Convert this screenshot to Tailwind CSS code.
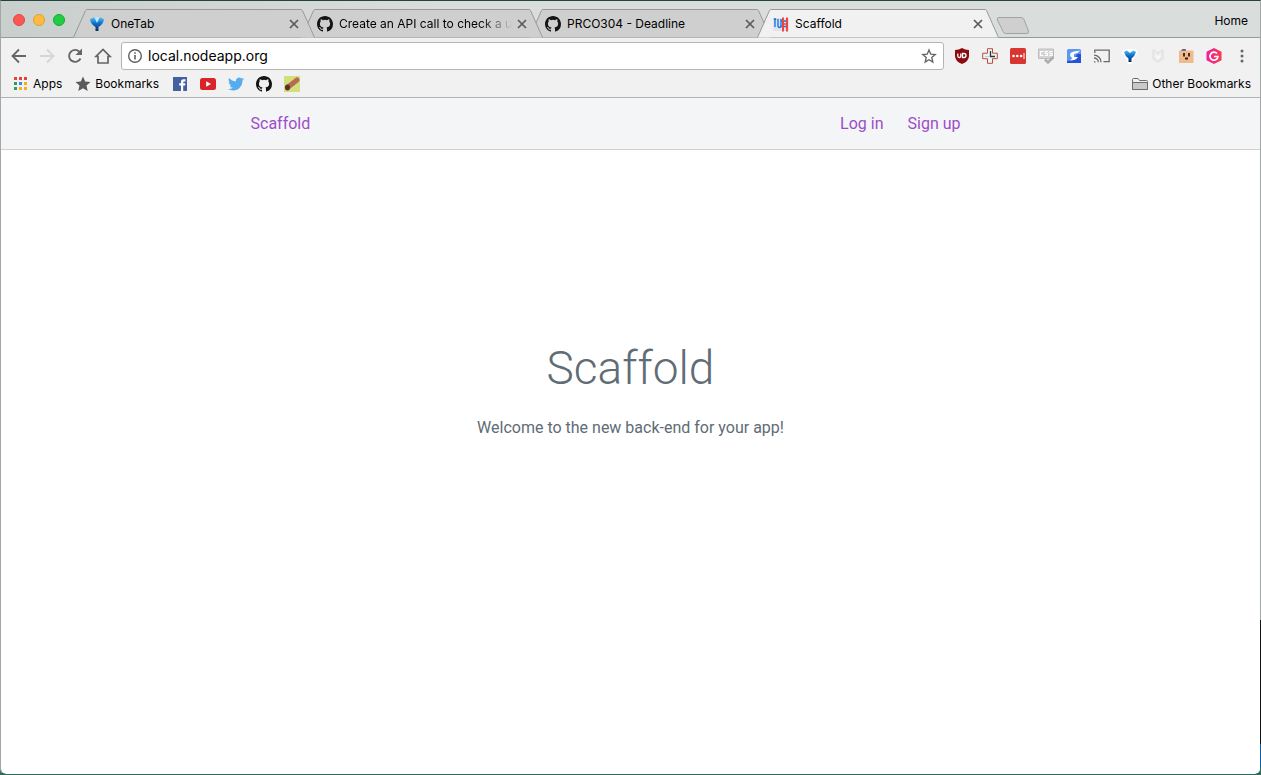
<!DOCTYPE html>
<html lang="en">
<head>
<meta charset="utf-8">
<title>Scaffold</title>
<script src="https://cdn.jsdelivr.net/npm/@tailwindcss/browser@4"></script>
</head>
<body class="bg-[linear-gradient(#a3a7a6_80%,#151515_80%_96%,#0b5fa5_96%_99%,#2f6b5c_99%)]">
<svg class="absolute size-0" aria-hidden="true">
  <symbol id="github" viewBox="0 0 16 16"><path fill="#141414" d="M8 0C3.58 0 0 3.58 0 8c0 3.54 2.29 6.53 5.47 7.59.4.07.55-.17.55-.38 0-.19-.01-.82-.01-1.49-2.01.37-2.53-.49-2.69-.94-.09-.23-.48-.94-.82-1.13-.28-.15-.68-.52-.01-.53.63-.01 1.08.58 1.23.82.72 1.21 1.87.87 2.33.66.07-.52.28-.87.51-1.07-1.78-.2-3.64-.89-3.64-3.95 0-.87.31-1.59.82-2.15-.08-.2-.36-1.02.08-2.12 0 0 .67-.21 2.2.82a7.6 7.6 0 0 1 4 0c1.53-1.04 2.2-.82 2.2-.82.44 1.1.16 1.92.08 2.12.51.56.82 1.27.82 2.15 0 3.07-1.87 3.75-3.65 3.95.29.25.54.73.54 1.48 0 1.07-.01 1.93-.01 2.2 0 .21.15.46.55.38A8 8 0 0 0 16 8c0-4.42-3.58-8-8-8z"/></symbol>
  <symbol id="close" viewBox="0 0 10 10"><path d="M1 1l8 8M9 1L1 9" stroke="#5a5a5a" stroke-width="1.7" fill="none"/></symbol>
  <linearGradient id="blue" x2="0" y2="1"><stop offset="0" stop-color="#52c2f2"/><stop offset=".4" stop-color="#1673cf"/><stop offset="1" stop-color="#062c5c"/></linearGradient>
  <linearGradient id="gem" x2="1" y2="0"><stop offset="0" stop-color="#f01ea0"/><stop offset="1" stop-color="#f83a4c"/></linearGradient>
  <symbol id="tab" viewBox="0 0 242 29"><path d="M.5 28.500L12.500 1.500Q13 .5 14 .5H228Q229 .5 229.500 1.500L241.500 28.500" stroke="#979a99"/></symbol>
</svg>
<div class="flex min-h-screen flex-col overflow-hidden rounded-b-md border-x border-t border-b border-t-[#24453f] border-r-transparent border-b-[#2f6b5c] border-l-[#a3a7a6] bg-white bg-clip-padding font-['Inter','Liberation_Sans',sans-serif] text-black">

  <header class="text-xs leading-4">
    <div class="flex h-[37px] border-b border-[#979a99] bg-linear-to-r from-[#c9cfcd] to-[#d9dddc] to-35%">
      <div class="flex w-[72px] shrink-0 gap-2 pt-[13px] pl-3">
        <button aria-label="Close window" class="size-3 rounded-full border border-[#e2463f] bg-[#fc5753]"></button>
        <button aria-label="Minimize window" class="size-3 rounded-full border border-[#e0a12c] bg-[#fdbc40]"></button>
        <button aria-label="Zoom window" class="size-3 rounded-full border border-[#12ac28] bg-[#22cc44]"></button>
      </div>
      <nav aria-label="Tabs" class="mt-2 flex h-[29px]">
        <div class="relative z-30 flex w-[242px] items-center pr-3 pl-4">
          <svg class="absolute inset-0 h-[29px] w-[242px]" fill="#cfcfcf"><use href="#tab"/></svg>
          <svg class="relative size-4" viewBox="0 0 16 16" aria-hidden="true"><path d="M1 3.500Q3 1.500 5 1.500L8 3l3-1.500q2 0 4 2Q14 8.500 9.500 11v4h-3v-4Q2 8.500 1 3.500z" fill="url(#blue)"/><path d="M5.500 1.500h5L8 7z" fill="#bfeaff"/></svg>
          <a href="#" class="relative ml-[6px] flex-1">OneTab</a>
          <button aria-label="Close OneTab" class="relative p-1"><svg class="size-[10px]"><use href="#close"/></svg></button>
        </div>
        <div class="relative z-20 -ml-[14px] flex w-[242px] items-center pr-3 pl-4">
          <svg class="absolute inset-0 h-[29px] w-[242px]" fill="#cfcfcf"><use href="#tab"/></svg>
          <svg class="relative size-4 shrink-0" aria-hidden="true"><use href="#github"/></svg>
          <a href="#" class="relative mr-auto ml-[6px] whitespace-nowrap mask-r-from-82% mask-r-to-100%">Create an API call to check a u</a>
          <button aria-label="Close Create an API call" class="relative -ml-4 p-1"><svg class="size-[10px]"><use href="#close"/></svg></button>
        </div>
        <div class="relative z-10 -ml-[14px] flex w-[242px] items-center pr-3 pl-4">
          <svg class="absolute inset-0 h-[29px] w-[242px]" fill="#cfcfcf"><use href="#tab"/></svg>
          <svg class="relative size-4" aria-hidden="true"><use href="#github"/></svg>
          <a href="#" class="relative ml-[6px] flex-1">PRCO304 - Deadline</a>
          <button aria-label="Close PRCO304" class="relative p-1"><svg class="size-[10px]"><use href="#close"/></svg></button>
        </div>
        <div class="relative z-40 -ml-[14px] flex w-[242px] items-center pr-3 pl-4">
          <svg class="absolute inset-0 h-[29px] w-[242px]" fill="#f1f1f1"><use href="#tab"/></svg>
          <svg class="relative size-4" viewBox="0 0 16 16" aria-hidden="true"><rect y="2" width="16" height="13" rx="2" fill="#dfe3e8"/><path d="M1 2.500l1 1.500 1-1.500M2 3.500V11M5 3v6.500q0 2 1.500 2t1.500-2V3M8 5h7M8 10.500h7" stroke="#1976e8" stroke-width="1.400" fill="none"/><path d="M10 1.500v14M14 1.500v14" stroke="#ee4540" stroke-width="2"/><path d="M10 8h4" stroke="#ee4540" stroke-width="1.400"/></svg>
          <a href="#" aria-current="page" class="relative ml-[6px] flex-1">Scaffold</a>
          <button aria-label="Close Scaffold" class="relative p-1"><svg class="size-[10px]"><use href="#close"/></svg></button>
        </div>
      </nav>
      <button aria-label="New tab" class="-ml-[3px] self-start pt-4"><svg class="h-[18px] w-[34px]" viewBox="0 0 34 18"><path d="M3 .5H25Q27 .5 28 2.500L32.500 14Q33 16.500 31 16.500H9.500Q8 16.500 7 14.500L1.500 3Q.5.5 3 .5z" fill="#cfcfcf" stroke="#a0a3a2"/></svg></button>
      <button class="ml-auto self-start pt-3 pr-3">Home</button>
    </div>

    <div class="border-b border-[#b2b2b2] bg-[#f1f1f1]">
      <div class="flex items-center pt-1 pr-[10px]">
        <div class="flex w-[120px] shrink-0 gap-2 pl-2">
          <button aria-label="Back" class="size-5"><svg viewBox="0 0 20 20" fill="none" stroke="#666" stroke-width="1.800"><path d="M17 10H4M10 3.500L3.500 10L10 16.500"/></svg></button>
          <button aria-label="Forward" class="size-5"><svg viewBox="0 0 20 20" fill="none" stroke="#d6d6d6" stroke-width="1.800"><path d="M3 10H16M10 3.500L16.500 10L10 16.500"/></svg></button>
          <button aria-label="Reload" class="size-5"><svg viewBox="0 0 20 20" fill="none" stroke="#666" stroke-width="1.900"><path d="M15.500 12.500A6 6 0 1 1 14.500 5.800"/><path d="M17 2.500V9H10.500z" fill="#666" stroke="none"/></svg></button>
          <button aria-label="Home page" class="size-5"><svg viewBox="0 0 20 20" fill="none" stroke="#666" stroke-width="1.700"><path d="M5 10.500H3L10 3.500l7 7H15V17H5z"/></svg></button>
        </div>
        <div class="flex h-7 flex-1 items-center rounded-[3px] border border-[#b4b4b4] bg-white px-[5px]">
          <svg class="size-4 shrink-0" viewBox="0 0 16 16" fill="none" stroke="#5f5f5f" aria-hidden="true"><circle cx="8" cy="8" r="6.300" stroke-width="1.400"/><path d="M8 7v4.500M8 4.200v1.600" stroke-width="1.600"/></svg>
          <input aria-label="Address" value="local.nodeapp.org" class="ml-[5px] min-w-0 flex-1 bg-transparent text-sm outline-none">
          <button aria-label="Bookmark this page"><svg class="size-[18px]" viewBox="0 0 18 18" fill="none" stroke="#666" stroke-width="1.400"><path d="M9 3l1.800 4.200 4.400.4-3.400 3 1 4.400L9 12.700 5.200 15l1-4.400-3.400-3 4.400-.4z"/></svg></button>
        </div>
        <div class="ml-[10px] flex gap-3">
          <button aria-label="uBlock" class="size-4"><svg viewBox="0 0 16 16"><path d="M8 0q3 2 7 2v6q0 5-7 8q-7-3-7-8V2q4 0 7-2z" fill="#8c0b0f"/><path d="M3.800 5.500v2.500q0 1.500 1.500 1.500T6.800 8V5.500M8.500 5.500H10a2 2 0 0 1 0 4H8.500z" stroke="#fff" stroke-width="1.300" fill="none"/></svg></button>
          <button aria-label="Web timer" class="size-4"><svg viewBox="0 0 16 16"><path d="M5.500.7h5v4.500h4.800v5.500h-4.800v4.600h-5v-4.600H.7V5.200h4.800z" fill="#eef2f7" stroke="#b5503f"/><path d="M8.500 3v5.500H13" stroke="#333" stroke-width="1.300" fill="none"/><path d="M3 8.500h5" stroke="#c3cbd6"/></svg></button>
          <button aria-label="Password manager" class="size-4"><svg viewBox="0 0 16 16"><rect width="16" height="16" rx="1.500" fill="#d93531"/><circle cx="3.500" cy="8" r="1.300" fill="#fff"/><circle cx="7.300" cy="8" r="1.300" fill="#fff"/><circle cx="11.100" cy="8" r="1.300" fill="#fff"/><path d="M14 5v6" stroke="#fff"/></svg></button>
          <button aria-label="CSS checker" class="size-4"><svg viewBox="0 0 16 16" fill="none"><path d="M.5 1h15v9.500H.5z" fill="#d4d4d4" stroke="#bdbdbd"/><path d="M5.500 3.500h-3v4h3M10 3.500H7.500v2h2v2H7M14.500 3.500H12v2h2v2h-2.500" stroke="#fff" stroke-width="1.200"/><path d="M7 11.500l3 3L15.500 9" stroke="#acacac" stroke-width="2.500"/></svg></button>
          <button aria-label="Sync" class="size-4"><svg viewBox="0 0 16 16"><rect x="1" y="1" width="14" height="14" rx="1.500" fill="#5c97f6"/><path d="M15 6v9H1v-2q8 0 10-7z" fill="#2453d8"/><path d="M4 6.500q.5-2.500 4-3L14 2.500 11.500 5 8 6v3h4q-2 3.500-8 3.500L6.500 10Q4 9 4 6.500z" fill="#fff"/></svg></button>
          <button aria-label="Cast" class="size-4"><svg viewBox="0 0 16 16" fill="none" stroke="#6a6a6a" stroke-width="1.300"><path d="M.8 5V2.200H15.200V13.700H9.500M0 7.200A7 7 0 0 1 7 14.300M0 10a4.300 4.300 0 0 1 4.300 4.300"/><path d="M0 12.500l2 2H0z" fill="#6a6a6a" stroke="none"/></svg></button>
          <button aria-label="OneTab" class="size-4"><svg viewBox="0 0 16 16"><path d="M3 1h10l3 3-5 8-1 4H6l-1-4L0 4z" fill="#fff"/><path d="M2 4Q3.500 2.500 5 2.500L8 5l3-2.500q1.500 0 3 1.500-1 4-4.500 6.500V14h-3v-3.500Q3 8 2 4z" fill="url(#blue)"/></svg></button>
          <button aria-label="Site advisor" class="size-4"><svg viewBox="0 0 16 16"><path d="M3 1.500l5 3.500 5-3.500v9l-5 4-5-4z" fill="#eaeaea" stroke="#dedede"/><path d="M5.500 6l2.500 2 2.500-2v3.500L8 11.500 5.500 9.500z" fill="#f8f8f8"/></svg></button>
          <button aria-label="Face" class="size-4"><svg viewBox="0 0 16 16"><path d="M1 2.500h14.500V15H1z" fill="#f0ba8c"/><path d="M3 2.500Q4 .5 8 1.500v1z" fill="#19194a"/><path d="M6 5v3.500M11 5v3.500M7 10.500h3" stroke="#30201c" stroke-width="1.800"/></svg></button>
          <button aria-label="Grammar" class="size-4"><svg viewBox="0 0 16 16"><path d="M8 0l7.500 3.800v8.400L8 16 .5 12.200V3.800z" fill="url(#gem)"/><path d="M11 5.500A4 4 0 1 0 12 8.500H8" stroke="#fff" stroke-width="1.700" fill="none"/></svg></button>
          <button aria-label="Menu" class="size-4"><svg viewBox="0 0 16 16" fill="#666"><circle cx="8" cy="3" r="1.500"/><circle cx="8" cy="8" r="1.500"/><circle cx="8" cy="13" r="1.500"/></svg></button>
        </div>
      </div>

      <nav aria-label="Bookmarks" class="flex h-[27px] items-center pr-[9px] pl-3">
        <a href="#" class="flex items-center gap-[5px]"><svg class="size-[15px]" viewBox="0 0 15 15"><path fill="#ea4035" d="M1 1h3v3H1zM6 1h3v3H6zM11 1h3v3h-3z"/><path fill="#2e9e58" d="M1 6h3v3H1zM1 11h3v3H1z"/><path fill="#3f82f0" d="M6 6h3v3H6z"/><path fill="#f3ae22" d="M11 6h3v3h-3zM11 11h3v3h-3zM6 11h3v3H6z"/></svg>Apps</a>
        <a href="#" class="ml-[13px] flex items-center gap-1"><svg class="size-4" viewBox="0 0 16 16" fill="#5a5a5a"><path d="M8 .5l2.200 5 5.300.5-4 3.600 1.200 5.400L8 12.200 3.300 15l1.200-5.400L.5 6l5.300-.5z"/></svg>Bookmarks</a>
        <div class="ml-[13px] flex gap-3">
          <a href="#" aria-label="Facebook"><svg class="size-4" viewBox="0 0 16 16"><rect x="1" y="1" width="14" height="14" fill="#4560a0"/><path d="M9 15V9.500H7.200V7.300H9V5.800Q9 3.300 11.500 3.300h2v2.200h-1.200q-1.100 0-1.100 1v.8h2.200l-.3 2.200h-1.900V15z" fill="#fff"/></svg></a>
          <a href="#" aria-label="YouTube"><svg class="size-4" viewBox="0 0 16 16"><rect y="2" width="16" height="12" rx="2.500" fill="#d9252a"/><path d="M6.200 5.300L11 8l-4.800 2.700z" fill="#fff"/></svg></a>
          <a href="#" aria-label="Twitter"><svg class="size-4" viewBox="0 0 24 24" fill="#55acee"><path d="M23.950 4.570a10 10 0 0 1-2.820.77 4.960 4.960 0 0 0 2.160-2.720c-.95.550-2 .960-3.130 1.190a4.920 4.920 0 0 0-8.380 4.480C7.690 8.090 4.070 6.130 1.640 3.160a4.820 4.820 0 0 0-.67 2.470c0 1.710.87 3.210 2.190 4.100a4.900 4.900 0 0 1-2.230-.62v.06a4.920 4.920 0 0 0 3.950 4.830 5 5 0 0 1-2.210.080 4.940 4.940 0 0 0 4.600 3.420A9.870 9.870 0 0 1 0 19.540a14 14 0 0 0 7.550 2.210c9.050 0 14-7.500 14-13.980 0-.210 0-.420-.020-.630a9.940 9.940 0 0 0 2.460-2.550z"/></svg></a>
          <a href="#" aria-label="GitHub"><svg class="size-4"><use href="#github"/></svg></a>
          <a href="#" aria-label="Log"><svg class="size-4" viewBox="0 0 16 16"><path fill="#d2df7c" d="M0 0h16v16H0z"/><path d="M3.500 11.500L13 4" stroke="#b56c50" stroke-width="5" stroke-linecap="round"/><ellipse cx="3.500" cy="11.500" rx="2.500" ry="3" fill="#5d302a"/></svg></a>
        </div>
        <a href="#" class="ml-auto flex items-center gap-1"><svg class="size-4" viewBox="0 0 16 16" fill="#f1f1f1" stroke="#6c6c6c"><path d="M.5 13.500V3.500q0-1 1-1H6l1.500 2h7q1 0 1 1v8z"/><path d="M.5 6.500h15v7H.5z" fill="#c9c9c9"/></svg>Other Bookmarks</a>
      </nav>
    </div>
  </header>

  <div class="flex-1 font-['Roboto',sans-serif] text-base leading-6 text-[#606c76]">
    <nav aria-label="Site" class="border-b border-[#d1d1d1] bg-[#f4f5f6]">
      <div class="mx-auto flex h-[51px] max-w-[800px] items-center pt-px pr-[70px] pl-5 text-[#9b4dca]">
        <a href="#" class="mr-auto">Scaffold</a>
        <a href="#" class="mr-6">Log in</a>
        <a href="#">Sign up</a>
      </div>
    </nav>
    <main class="pt-[188px] text-center">
      <h1 class="text-[46px] leading-[60px] font-light">Scaffold</h1>
      <p class="mt-[18px]">Welcome to the new back-end for your app!</p>
    </main>
  </div>
</div>
</body>
</html>
